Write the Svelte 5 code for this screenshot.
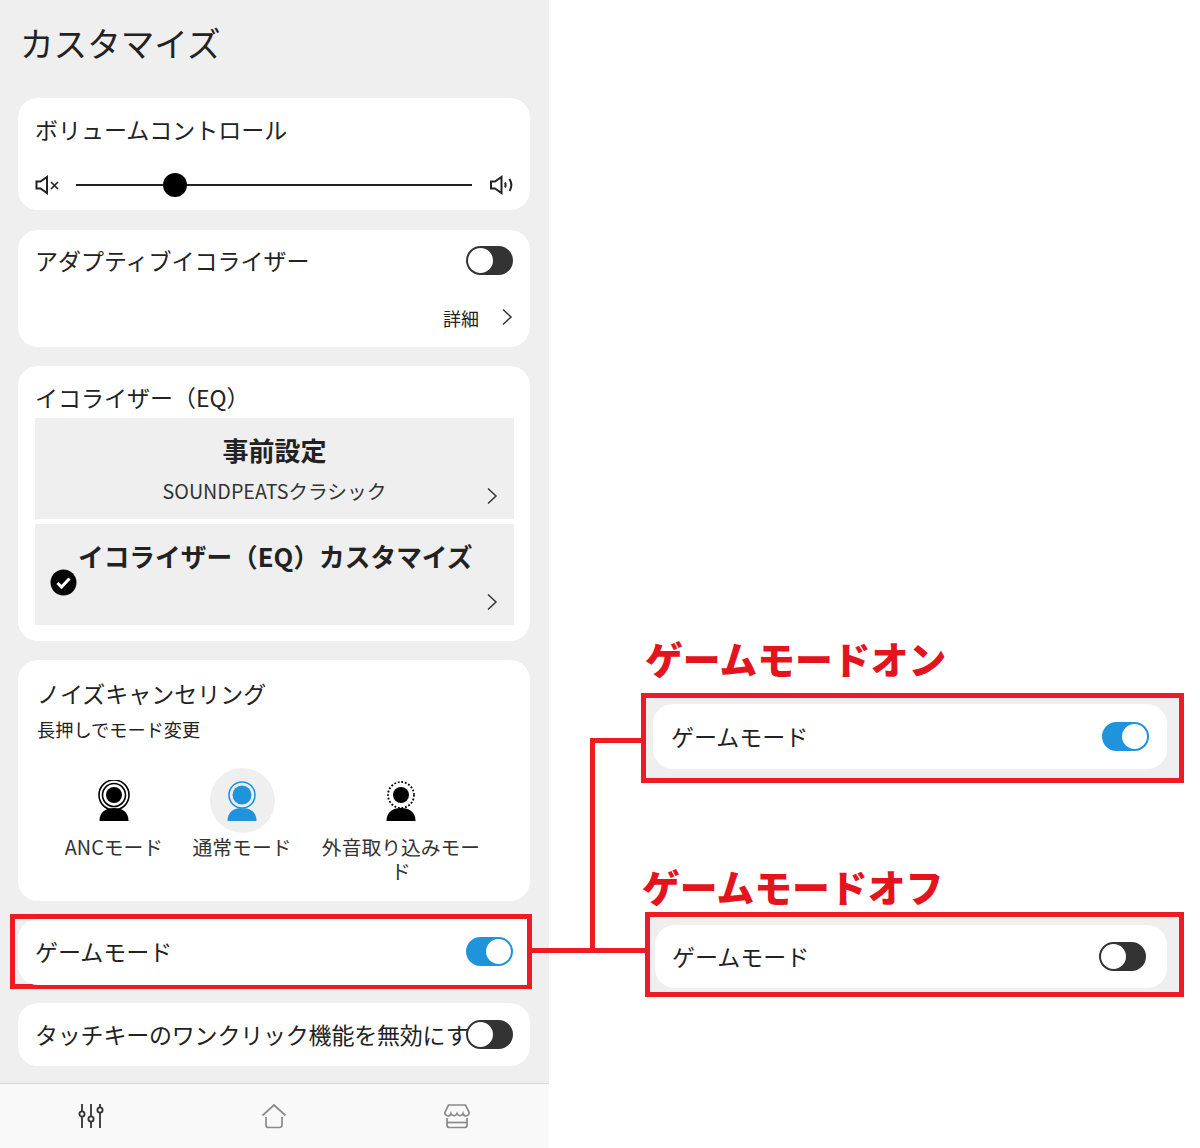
<script>
	const modes = [
		{ label: 'ANCモード', kind: 'anc' },
		{ label: '通常モード', kind: 'normal', active: true },
		{ label: '外音取り込みモード', kind: 'ambient' }
	];
</script>

{#snippet toggle(on)}
	<span class="toggle" class:on><span class="knob"></span></span>
{/snippet}

{#snippet chevron()}
	<svg class="chev" width="12" height="18" viewBox="0 0 12 18"><path d="M2 1.500 10 9 2 16.500" fill="none" stroke="#333" stroke-width="1.500" /></svg>
{/snippet}

<div class="page">
	<main class="panel">
		<h1>カスタマイズ</h1>

		<section class="card volume">
			<h2>ボリュームコントロール</h2>
			<div class="slider-row">
				<svg width="26" height="20" viewBox="0 0 26 20" fill="none" stroke="#222" stroke-width="2">
					<path d="M1.500 6.500h4L12 2v16l-6.500-4.500h-4z" />
					<path d="M16 7l7 7M23 7l-7 7" stroke-width="1.600" />
				</svg>
				<div class="track"><span class="thumb"></span></div>
				<svg width="26" height="20" viewBox="0 0 26 20" fill="none" stroke="#222" stroke-width="2">
					<path d="M2 6.500h4L12.500 2v16L6 13.500H2z" />
					<path d="M16 7.500c.8 1.700.8 3.300 0 5M20.500 4c2.500 4 2.500 8 0 12" />
				</svg>
			</div>
		</section>

		<section class="card adaptive">
			<div class="row">
				<h2>アダプティブイコライザー</h2>
				{@render toggle(false)}
			</div>
			<div class="details"><span>詳細</span>{@render chevron()}</div>
		</section>

		<section class="card eq">
			<h2>イコライザー（EQ）</h2>
			<div class="preset">
				<strong>事前設定</strong>
				<span>SOUNDPEATSクラシック</span>
				{@render chevron()}
			</div>
			<div class="preset custom">
				<svg class="check" width="27" height="27" viewBox="0 0 27 27">
					<circle cx="13.500" cy="13.500" r="13" fill="#050505" />
					<path d="M7.500 14l4 4 8-8.500" fill="none" stroke="#fff" stroke-width="3" />
				</svg>
				<strong>イコライザー（EQ）カスタマイズ</strong>
				{@render chevron()}
			</div>
		</section>

		<section class="card noise">
			<h2>ノイズキャンセリング</h2>
			<p>長押しでモード変更</p>
			<div class="modes">
				{#each modes as m}
					<div class="mode {m.kind}" class:active={m.active}>
						<span class="mode-icon">
							<svg width="40" height="42" viewBox="0 0 40 42" fill={m.active ? '#1f94dc' : '#000'}>
								{#if m.kind === 'anc'}
									<circle cx="20" cy="15" r="15" fill="none" stroke="#000" stroke-width="1.600" />
									<circle cx="20" cy="15" r="11.500" fill="none" stroke="#000" stroke-width="1.600" />
									<circle cx="20" cy="15" r="8" />
								{:else if m.kind === 'normal'}
									<circle cx="20" cy="15" r="13" fill="none" stroke="#1f94dc" stroke-width="1.600" />
									<circle cx="20" cy="15" r="9.500" />
								{:else}
									<circle cx="20" cy="15" r="13" fill="none" stroke="#000" stroke-width="1.800" stroke-dasharray="1.800 1.800" />
									<circle cx="20" cy="15" r="8" />
								{/if}
								<path d="M5.500 41c0-9 6-13 14.500-13s14.500 4 14.500 13z" />
							</svg>
						</span>
						<span class="mode-label">{m.label}</span>
					</div>
				{/each}
			</div>
		</section>

		<div class="callout game">
			<section class="card row">
				<h2>ゲームモード</h2>
				{@render toggle(true)}
			</section>
		</div>

		<section class="card row touch">
			<h2>タッチキーのワンクリック機能を無効にす</h2>
			{@render toggle(false)}
		</section>

		<nav class="tabs">
			<svg width="26" height="26" viewBox="0 0 26 26" fill="none" stroke="#333" stroke-width="1.800">
				<path d="M4 1v7M4 14v11M13 1v12M13 19v6M22 1v3M22 10v15" />
				<circle cx="4" cy="11" r="2.600" />
				<circle cx="13" cy="16" r="2.600" />
				<circle cx="22" cy="7" r="2.600" />
			</svg>
			<svg width="26" height="26" viewBox="0 0 26 26" fill="none" stroke="#8a8a8a" stroke-width="1.700">
				<path d="M1.500 12.500 13 2l11.500 10.500" />
				<path d="M5 14v8a2.500 2.500 0 0 0 2.500 2.500h11A2.500 2.500 0 0 0 21 22v-8" />
			</svg>
			<svg width="26" height="26" viewBox="0 0 26 26" fill="none" stroke="#8a8a8a" stroke-width="1.700">
				<path d="M4.500 2h17L25 9a3 3 0 0 1-6 1.500 3.200 3.200 0 0 1-6 0 3.200 3.200 0 0 1-6 0A3 3 0 0 1 1 9z" />
				<path d="M3 15v7a2.500 2.500 0 0 0 2.500 2.500h15A2.500 2.500 0 0 0 23 22v-7" />
				<path d="M3 19.500h20" />
			</svg>
		</nav>
	</main>

	<aside class="notes">
		<h3 class="on-title">ゲームモードオン</h3>
		<div class="callout box-on">
			<section class="card row">
				<h2>ゲームモード</h2>
				{@render toggle(true)}
			</section>
		</div>
		<h3 class="off-title">ゲームモードオフ</h3>
		<div class="callout box-off">
			<section class="card row">
				<h2>ゲームモード</h2>
				{@render toggle(false)}
			</section>
		</div>
	</aside>

	<!-- connector between the red boxes -->
	<span class="line h-main"></span>
	<span class="line v-main"></span>
	<span class="line h-top"></span>
</div>

<style>
	:global(body) { background: #fff; }

	.page {
		position: relative;
		display: flex;
		width: 1200px;
		height: 1148px;
		overflow: hidden;
		color: #222;
		font-family: "Noto Sans CJK JP", "Noto Sans", sans-serif;
	}

	.panel { width: 549px; height: 1148px; flex-shrink: 0; background: #efefef; display: flex; flex-direction: column; align-items: flex-start; }
	h1 { height: 98px; margin: 0 0 0 20px; font-size: 33.600px; font-weight: 400; line-height: 86px; }
	h2 { margin: 0; font-size: 23px; font-weight: 400; line-height: 32px; white-space: nowrap; }

	.card { width: 512px; margin-left: 18px; box-sizing: border-box; background: #fff; border-radius: 20px; padding: 0 17px; flex-shrink: 0; }
	.row { display: flex; align-items: center; justify-content: space-between; }

	.toggle { position: relative; display: block; width: 47px; height: 29px; flex-shrink: 0; border-radius: 15px; background: #333; }
	.toggle.on { background: #1f94dc; }
	.knob { position: absolute; left: 2px; top: 2px; width: 25px; height: 25px; border-radius: 50%; background: #fff; }
	.toggle.on .knob { left: 20px; }

	.volume { height: 112px; padding-top: 15px; }
	.slider-row { display: flex; align-items: center; gap: 15px; margin-top: 30px; }
	.slider-row > * { flex-shrink: 0; }
	.track { position: relative; width: 396px; height: 2px; background: #222; }
	.thumb { position: absolute; left: 87px; top: -11px; width: 24px; height: 24px; border-radius: 50%; background: #000; }
	.slider-row svg:last-child { margin-left: 2px; }

	.adaptive { height: 117px; margin-top: 20px; padding-top: 14px; }
	.details { display: flex; justify-content: flex-end; align-items: center; gap: 22px; margin-top: 30px; font-size: 18px; line-height: 24px; }
	.details .chev { margin-top: -2px; }

	.eq { height: 275px; margin-top: 19px; padding: 15px 16px 0 17px; }
	.preset { position: relative; height: 101px; margin-top: 5px; background: #efefef; text-align: center; }
	.preset strong { display: block; padding-top: 13px; font-size: 26px; font-weight: 700; line-height: 38px; }
	.preset span { display: block; margin-top: 7px; font-size: 19.700px; line-height: 30px; color: #333; }
	.preset .chev { position: absolute; right: 16px; bottom: 14px; }
	.custom { margin-top: 5px; text-align: left; }
	.custom strong { padding: 13px 0 0 43px; font-size: 25.700px; }
	.check { position: absolute; left: 15px; top: 45px; }

	.noise { height: 241px; margin-top: 19px; padding: 17px 19px 0; }
	.noise p { margin: 7px 0 0; font-size: 18.200px; line-height: 26px; }
	.modes { display: flex; margin-top: 26px; text-align: center; }
	.mode { display: flex; flex-direction: column; align-items: center; }
	.mode.anc { width: 154px; }
	.mode.normal { width: 102px; }
	.mode.ambient { width: 170px; margin-left: 23px; }
	.mode-icon { display: flex; align-items: center; justify-content: center; width: 65px; height: 65px; border-radius: 50%; }
	.active .mode-icon { background: #efefef; }
	.mode-label { margin-top: 2px; font-size: 19.800px; line-height: 24px; color: #333; }

	.callout { border: 5px solid #ed1c24; background: #efefef; box-sizing: border-box; flex-shrink: 0; }
	.game { width: 522px; height: 75px; margin: 13px 0 0 10px; display: flex; align-items: center; }
	.game .card { width: 509px; height: 66px; margin-left: 3px; padding-right: 14px; border-radius: 20px 0 0 20px; }
	.game h2 { margin-top: -2px; }
	.touch { height: 63px; margin-top: 14px; }
	.touch h2 { flex: 1; min-width: 0; margin-top: -2px; letter-spacing: -0.200px; }

	.tabs { display: flex; justify-content: space-around; align-items: center; box-sizing: border-box; width: 100%; height: 65px; margin-top: 17px; background: #f9f9f9; border-top: 1px solid #d6d6d6; padding-right: 1px; }

	.notes { position: relative; width: 651px; display: flex; flex-direction: column; }
	h3 { margin: 0; font-size: 37.800px; line-height: 48px; font-weight: 900; color: #e2141d; white-space: nowrap; }
	.on-title { margin: 634px 0 0 96px; }
	.off-title { margin: 79px 0 0 93px; }
	.box-on { width: 543px; height: 90px; margin: 11px 0 0 92px; padding: 6px 12px 9px 7px; }
	.box-on h2 { margin-top: -2px; }
	.box-off { width: 539px; height: 85px; margin: 2px 0 0 96px; padding: 8px 12px 4px 5px; }
	.box-off h2 { margin-top: -2px; }
	.notes .card { width: 100%; height: 100%; margin-left: 0; padding: 0 18px; }
	.box-off .card { padding: 0 21px 0 17px; }

	.line { position: absolute; background: #ed1c24; }
	.h-main { left: 531px; top: 948px; width: 115px; height: 5px; }
	.v-main { left: 590px; top: 738px; width: 5px; height: 212px; }
	.h-top { left: 590px; top: 738px; width: 52px; height: 5px; }
</style>
